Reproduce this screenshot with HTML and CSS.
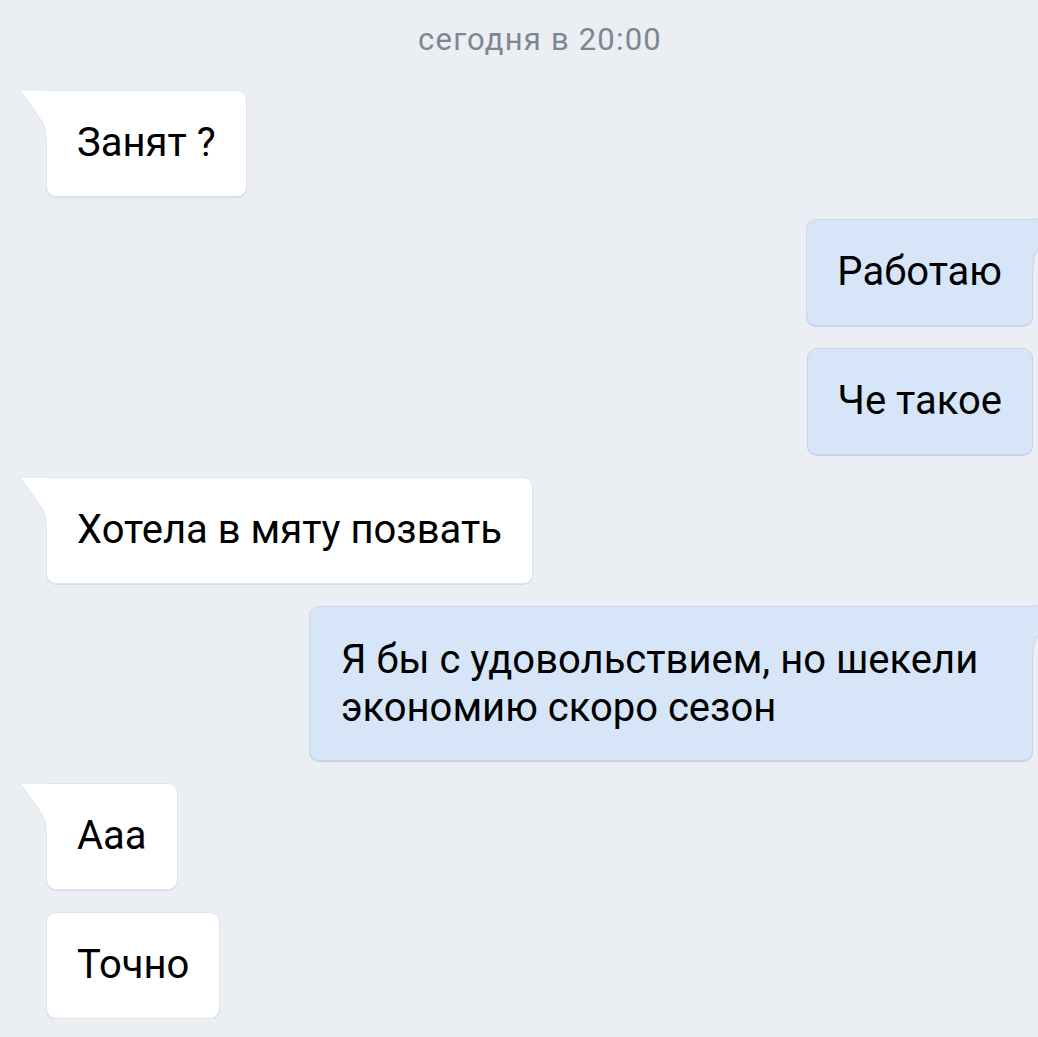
FILE: index.html
```html
<!DOCTYPE html>
<html lang="ru">
<head>
<meta charset="utf-8">
<title>Чат</title>
<link rel="stylesheet" href="styles.css">
</head>
<body>
<div class="chat">
  <div class="time">сегодня в 20:00</div>
  <div class="row in"><div class="msg tail">Занят ?<svg class="tl" width="30" height="50" viewBox="0 0 30 50"><path d="M30 1 H3 L26 34 Q29 40 29 50 H30 Z" class="tf"/><path d="M30 1 H3 L26 34 Q29 40 29 50" class="ts"/></svg></div></div>
  <div class="row out"><div class="msg tail">Работаю<svg class="tr" width="30" height="50" viewBox="0 0 30 50"><path d="M0 1 H27 L4 34 Q1 40 1 50 H0 Z" class="tf"/><path d="M0 1 H27 L4 34 Q1 40 1 50" class="ts"/></svg></div></div>
  <div class="row out"><div class="msg">Че такое</div></div>
  <div class="row in"><div class="msg tail">Хотела в мяту позвать<svg class="tl" width="30" height="50" viewBox="0 0 30 50"><path d="M30 1 H3 L26 34 Q29 40 29 50 H30 Z" class="tf"/><path d="M30 1 H3 L26 34 Q29 40 29 50" class="ts"/></svg></div></div>
  <div class="row out"><div class="msg tail wide">Я бы с удовольствием, но шекели экономию скоро сезон<svg class="tr" width="30" height="50" viewBox="0 0 30 50"><path d="M0 1 H27 L4 34 Q1 40 1 50 H0 Z" class="tf"/><path d="M0 1 H27 L4 34 Q1 40 1 50" class="ts"/></svg></div></div>
  <div class="row in"><div class="msg tail">Ааа<svg class="tl" width="30" height="50" viewBox="0 0 30 50"><path d="M30 1 H3 L26 34 Q29 40 29 50 H30 Z" class="tf"/><path d="M30 1 H3 L26 34 Q29 40 29 50" class="ts"/></svg></div></div>
  <div class="row in"><div class="msg">Точно</div></div>
</div>
</body>
</html>
```
FILE: styles.css
```css
html, body {
  margin: 0;
  padding: 0;
  background: #ebeff3;
  overflow: hidden;
}
.chat {
  display: flex;
  flex-direction: column;
  gap: 22px;
  padding: 22px 0 0 0;
  font-family: Roboto, "Noto Sans", sans-serif;
}
.time {
  text-align: center;
  font-size: 31px;
  letter-spacing: 1.2px;
  line-height: 36px;
  color: #7d8792;
  margin-bottom: 10px;
  padding-left: 42px;
}
.row {
  display: flex;
}
.row.in {
  justify-content: flex-start;
  padding-left: 46px;
}
.row.out {
  justify-content: flex-end;
  padding-right: 5px;
}
.msg {
  position: relative;
  box-sizing: border-box;
  font-size: 40px;
  line-height: 48px;
  color: #000;
  padding: 28px 30px 29px;
  border-radius: 10px;
  border: 1px solid #dfe4ea;
  box-shadow: 0 1px 0 #d6dce3;
}
.in .msg {
  background: #ffffff;
}
.out .msg {
  background: #d6e6f8;
  border-color: #c9d7e7;
  box-shadow: 0 1px 0 #c3d1e1;
}
.in .msg.tail {
  border-top-left-radius: 0;
}
.out .msg.tail {
  border-top-right-radius: 0;
}
.wide {
  width: 724px;
  padding: 29px 31px 28px;
}
.tl, .tr {
  position: absolute;
  top: -2px;
  overflow: visible;
}
.tl {
  left: -30px;
}
.tr {
  right: -30px;
}
.tf {
  stroke: none;
}
.in .tf { fill: #ffffff; }
.out .tf { fill: #d6e6f8; }
.ts {
  fill: none;
  stroke-width: 1;
}
.in .ts { stroke: #dfe4ea; }
.out .ts { stroke: #c9d7e7; }
```
